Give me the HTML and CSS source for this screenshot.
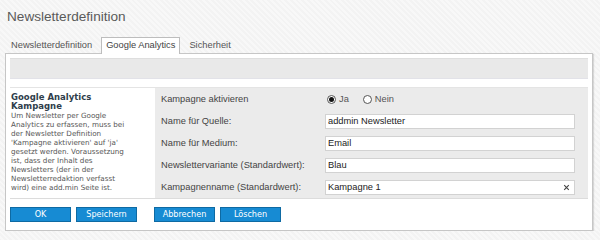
FILE: index.html
```html
<!doctype html>
<html lang="de">
	<head>
		<meta charset="utf-8">
		<meta name="viewport" content="width=device-width, initial-scale=1">
		<title>Newsletterdefinition</title>

		<link rel="stylesheet" href="styles.css">
	</head>
	<body>
		<h1 class="title">Newsletterdefinition</h1>

		<div class="tabs">
			<span class="tab">Newsletterdefinition</span>
			<span class="tab active">Google Analytics</span>
			<span class="tab">Sicherheit</span>
		</div>

		<form class="panel" id="gaForm">
			<div class="toolbar"></div>

			<div class="content">
				<div class="help">
					<h2 class="helpTitle">Google Analytics<br>Kampagne</h2>
					<p class="helpText">
						Um Newsletter per Google<br>
						Analytics zu erfassen, muss bei<br>
						der Newsletter Definition<br>
						'Kampagne aktivieren' auf 'ja'<br>
						gesetzt werden. Voraussetzung<br>
						ist, dass der Inhalt des<br>
						Newsletters (der in der<br>
						Newsletterredaktion verfasst<br>
						wird) eine add.min Seite ist.
					</p>
				</div>

				<div class="fields">
					<label class="fieldLabel">Kampagne aktivieren</label>
					<div class="radios">
						<span class="radio on"></span><span class="radioText">Ja</span>
						<span class="radio"></span><span class="radioText">Nein</span>
					</div>

					<label class="fieldLabel" for="source">Name für Quelle:</label>
					<div class="field"><input type="text" id="source" value="addmin Newsletter"></div>

					<label class="fieldLabel" for="medium">Name für Medium:</label>
					<div class="field"><input type="text" id="medium" value="Email"></div>

					<label class="fieldLabel" for="variant">Newslettervariante (Standardwert):</label>
					<div class="field"><input type="text" id="variant" value="Blau"></div>

					<label class="fieldLabel" for="campaign">Kampagnenname (Standardwert):</label>
					<div class="field">
						<input type="text" id="campaign" value="Kampagne 1">
						<span class="clear">
							<svg width="7" height="7" viewBox="0 0 7 7"><path d="M1.2 1.2L5.8 5.8M5.8 1.2L1.2 5.8" stroke="#444" stroke-width="1.1"/></svg>
						</span>
					</div>
				</div>
			</div>

			<div class="buttons">
				<button type="button" class="btn">OK</button>
				<button type="button" class="btn">Speichern</button>
				<button type="button" class="btn gapLeft">Abbrechen</button>
				<button type="button" class="btn">Löschen</button>
			</div>
		</form>
	</body>
</html>
```

FILE: styles.css
```css
body {
	margin: 0;
	font-family: "Liberation Sans", Arial, sans-serif;
	color: #444;
	background: repeating-linear-gradient(45deg, #f3f3f3 0, #f3f3f3 2px, #f8f8f8 2px, #f8f8f8 4px);
}

.title {
	margin: 9px 0 0 7px;
	font-size: 13.6px;
	line-height: 16px;
	font-weight: normal;
	color: #5a5a5a;
}

.tabs {
	display: flex;
	align-items: flex-end;
	height: 16px;
	margin: 12px 0 0 5px;
}

.tab {
	height: 16px;
	box-sizing: border-box;
	padding: 0 5px;
	margin-right: 3px;
	font-size: 9.3px;
	line-height: 15px;
	color: #555;
	border: 1px solid transparent;
	border-bottom: 0;
}

.tab.active {
	position: relative;
	z-index: 1;
	height: 17px;
	margin-bottom: -1px;
	padding: 0 4px;
	background: #fff;
	border-color: #bdbdbd;
	color: #444;
}

.panel {
	margin: 0 7px 0 5px;
	padding: 4px;
	background: #fff;
	border: 1px solid #c6c6c6;
	box-shadow: 1px 1px 1px rgba(0, 0, 0, 0.12);
}

.toolbar {
	height: 21px;
	box-sizing: border-box;
	background: #e9e9e9;
	border-top: 1px solid #dedede;
	border-bottom: 1px solid #e2e2e8;
	margin-bottom: 8px;
}

.content {
	display: grid;
	grid-template-columns: 145px 1fr;
	border-top: 1px solid #e4e4e4;
	border-bottom: 1px solid #dcdcdc;
}

.help {
	padding: 4.5px 0 0 1px;
	font-family: "DejaVu Sans", Verdana, sans-serif;
}

.helpTitle {
	margin: 0;
	font-size: 8.5px;
	line-height: 9px;
	font-weight: bold;
	color: #2f3d4b;
}

.helpText {
	margin: 0;
	font-size: 7.2px;
	line-height: 9.1px;
	color: #555;
}

.fields {
	display: grid;
	grid-template-columns: 170px 250px;
	grid-auto-rows: 22px;
	align-items: center;
	padding-right: 12px;
	background: #ebebeb;
}

.fieldLabel {
	padding-left: 6px;
	font-size: 9.3px;
	color: #444;
}

.radios {
	display: flex;
	align-items: center;
	padding-left: 2px;
	font-size: 9.3px;
	color: #555;
}

.radio {
	display: flex;
	align-items: center;
	justify-content: center;
	width: 9px;
	height: 9px;
	box-sizing: border-box;
	border: 1px solid #555;
	border-radius: 50%;
	background: #fff;
}

.radio.on::after {
	content: "";
	width: 5px;
	height: 5px;
	border-radius: 50%;
	background: #111;
}

.radioText {
	margin: 0 14px 0 3px;
}

.field {
	position: relative;
	height: 15px;
}

.field input {
	display: block;
	width: 100%;
	height: 15px;
	box-sizing: border-box;
	margin: 0;
	padding: 0 2px;
	font-family: "Liberation Sans", Arial, sans-serif;
	font-size: 9.3px;
	color: #222;
	background: #fff;
	border: 1px solid #d2d2d2;
	border-radius: 0;
	outline: none;
}

.clear {
	position: absolute;
	right: 5px;
	top: 4px;
	display: flex;
}

.buttons {
	display: flex;
	gap: 5px;
	margin: 8px 0 4px 0;
}

.btn {
	width: 61px;
	height: 15px;
	box-sizing: border-box;
	padding: 0;
	font-family: "DejaVu Sans Condensed", "DejaVu Sans", sans-serif;
	font-size: 9px;
	line-height: 13px;
	color: #fff;
	background: #178bd3;
	border: 1px solid #0e6aa3;
	border-radius: 0;
}

.btn.gapLeft {
	margin-left: 12px;
}
```
